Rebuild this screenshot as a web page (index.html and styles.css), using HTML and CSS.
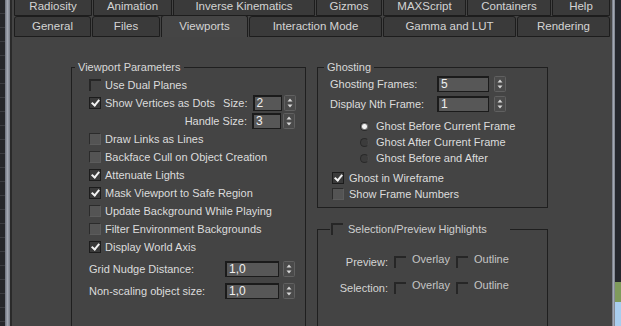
FILE: index.html
```html
<!DOCTYPE html>
<html lang="en">
<head>
    <meta charset="UTF-8">
    <meta name="viewport" content="width=device-width, initial-scale=1.0">
    <title>Preference Settings - Viewports</title>
    <link rel="stylesheet" href="styles.css">
</head>
<body>
    <div class="edge edge-left"></div>
    <div class="frame-bar"></div>
    <div class="frame-gap"></div>

    <div class="panel">
        <div class="tabs tabs-back">
            <div class="tab">Radiosity</div>
            <div class="tab">Animation</div>
            <div class="tab">Inverse Kinematics</div>
            <div class="tab">Gizmos</div>
            <div class="tab">MAXScript</div>
            <div class="tab">Containers</div>
            <div class="tab">Help</div>
        </div>
        <div class="tabs tabs-front">
            <div class="tab">General</div>
            <div class="tab">Files</div>
            <div class="tab active">Viewports</div>
            <div class="tab">Interaction Mode</div>
            <div class="tab">Gamma and LUT</div>
            <div class="tab">Rendering</div>
        </div>

        <div class="content">
            <fieldset class="group group-params">
                <legend>Viewport Parameters</legend>

                <div class="group-body">
                    <div class="check-row"><span class="box flat"></span>Use Dual Planes</div>
                    <div class="check-row">
                        <span class="box checked"></span>Show Vertices as Dots
                        <span class="spacer"></span>
                        <span class="field-label">Size:</span>
                        <span class="spinner"><span class="spin-field small">2</span><svg class="spin-arrows" viewBox="0 0 12 16" width="12" height="16"><rect x="0.5" y="0.5" width="11" height="15" rx="1" fill="#4a4a4a" stroke="#606060"/><path d="M6 3.5L8.5 6.5H3.5Z M6 12.5L8.5 9.5H3.5Z" fill="#d6d6d6"/></svg></span>
                    </div>
                    <div class="check-row right">
                        <span class="field-label">Handle Size:</span>
                        <span class="spinner"><span class="spin-field small">3</span><svg class="spin-arrows" viewBox="0 0 12 16" width="12" height="16"><rect x="0.5" y="0.5" width="11" height="15" rx="1" fill="#4a4a4a" stroke="#606060"/><path d="M6 3.5L8.5 6.5H3.5Z M6 12.5L8.5 9.5H3.5Z" fill="#d6d6d6"/></svg></span>
                    </div>
                    <div class="check-row"><span class="box"></span>Draw Links as Lines</div>
                    <div class="check-row"><span class="box"></span>Backface Cull on Object Creation</div>
                    <div class="check-row"><span class="box checked"></span>Attenuate Lights</div>
                    <div class="check-row"><span class="box checked"></span>Mask Viewport to Safe Region</div>
                    <div class="check-row"><span class="box"></span>Update Background While Playing</div>
                    <div class="check-row"><span class="box"></span>Filter Environment Backgrounds</div>
                    <div class="check-row"><span class="box checked"></span>Display World Axis</div>

                    <div class="value-row first">
                        <span>Grid Nudge Distance:</span>
                        <span class="spinner"><span class="spin-field wide">1,0</span><svg class="spin-arrows" viewBox="0 0 12 16" width="12" height="16"><rect x="0.5" y="0.5" width="11" height="15" rx="1" fill="#4a4a4a" stroke="#606060"/><path d="M6 3.5L8.5 6.5H3.5Z M6 12.5L8.5 9.5H3.5Z" fill="#d6d6d6"/></svg></span>
                    </div>
                    <div class="value-row">
                        <span>Non-scaling object size:</span>
                        <span class="spinner"><span class="spin-field wide">1,0</span><svg class="spin-arrows" viewBox="0 0 12 16" width="12" height="16"><rect x="0.5" y="0.5" width="11" height="15" rx="1" fill="#4a4a4a" stroke="#606060"/><path d="M6 3.5L8.5 6.5H3.5Z M6 12.5L8.5 9.5H3.5Z" fill="#d6d6d6"/></svg></span>
                    </div>
                </div>
            </fieldset>

            <div class="side">
                <fieldset class="group group-ghost">
                    <legend>Ghosting</legend>

                    <div class="group-body">
                        <div class="ghost-row">
                            <span class="ghost-label">Ghosting Frames:</span>
                            <span class="spinner"><span class="spin-field mid">5</span><svg class="spin-arrows" viewBox="0 0 12 16" width="12" height="16"><rect x="0.5" y="0.5" width="11" height="15" rx="1" fill="#4a4a4a" stroke="#606060"/><path d="M6 3.5L8.5 6.5H3.5Z M6 12.5L8.5 9.5H3.5Z" fill="#d6d6d6"/></svg></span>
                        </div>
                        <div class="ghost-row">
                            <span class="ghost-label">Display Nth Frame:</span>
                            <span class="spinner"><span class="spin-field mid">1</span><svg class="spin-arrows" viewBox="0 0 12 16" width="12" height="16"><rect x="0.5" y="0.5" width="11" height="15" rx="1" fill="#4a4a4a" stroke="#606060"/><path d="M6 3.5L8.5 6.5H3.5Z M6 12.5L8.5 9.5H3.5Z" fill="#d6d6d6"/></svg></span>
                        </div>

                        <div class="radios">
                            <div class="radio-row"><span class="radio on"></span>Ghost Before Current Frame</div>
                            <div class="radio-row"><span class="radio"></span>Ghost After Current Frame</div>
                            <div class="radio-row"><span class="radio"></span>Ghost Before and After</div>
                        </div>

                        <div class="ghost-checks">
                            <div class="small-check"><span class="box checked"></span>Ghost in Wireframe</div>
                            <div class="small-check"><span class="box"></span>Show Frame Numbers</div>
                        </div>
                    </div>
                </fieldset>

                <fieldset class="group group-highlight">
                    <legend><span class="box flat"></span>Selection/Preview Highlights</legend>

                    <div class="hl-row">
                        <span class="hl-label">Preview:</span>
                        <span class="box flat"></span><span class="hl-opt">Overlay</span>
                        <span class="box flat"></span><span class="hl-opt">Outline</span>
                    </div>
                    <div class="hl-row">
                        <span class="hl-label">Selection:</span>
                        <span class="box flat"></span><span class="hl-opt">Overlay</span>
                        <span class="box flat"></span><span class="hl-opt">Outline</span>
                    </div>
                </fieldset>
            </div>
        </div>
    </div>

    <div class="frame-bar thin"></div>
    <div class="edge edge-right"></div>
</body>
</html>
```

FILE: styles.css
```css
body {
    margin: 0;
    width: 621px;
    height: 326px;
    overflow: hidden;
    display: flex;
    background: #222327;
    font-family: "Liberation Sans", Arial, sans-serif;
    font-size: 11px;
    color: #dcdcdc;
}

/* viewport peeking out on both sides */
.edge {
    height: 100%;
}

.edge-left {
    width: 5px;
    background: repeating-linear-gradient(to bottom, #25262a 0 13px, #3b3c41 13px 14px);
}

.edge-right {
    width: 6px;
    background: linear-gradient(to bottom, #25272d 0 282px, #7f9a5c 282px 302px, #a9cdee 302px);
}

.frame-bar {
    width: 5px;
    background: linear-gradient(to right, #6c717d, #a3a8b3, #767b86);
}

.frame-bar.thin {
    width: 3px;
}

.frame-gap {
    width: 2px;
    background: #2a2a2a;
}

.panel {
    width: 600px;
    background: #444444;
    display: flex;
    flex-direction: column;
}

/* tabs */
.tabs {
    display: grid;
    padding-left: 2px;
    font-size: 11.5px;
}

.tabs-back {
    margin-top: -4px;
    height: 19px;
    grid-template-columns: 79px 80px 143px 67px 84px 85px 59px;
}

.tabs-front {
    margin-top: 1px;
    height: 20px;
    grid-template-columns: 78px 69px 88px 134px 134px 94px;
}

.tab {
    box-sizing: border-box;
    border: 1px solid #1d1d1d;
    border-radius: 3px 3px 0 0;
    background: #3a3a3a;
    color: #d4d4d4;
    text-align: center;
    line-height: 18px;
    margin-right: 1px;
}

.tab.active {
    background: #454545;
    border-bottom: none;
    margin-top: -1px;
    height: 22px;
    line-height: 20px;
    position: relative;
}

/* main content */
.content {
    display: flex;
    align-items: flex-start;
    padding-top: 24px;
    padding-left: 59px;
}

.group {
    margin: 0;
    padding: 0;
    border: 1px solid #1f1f1f;
    min-width: 0;
    box-sizing: border-box;
}

.group legend {
    padding: 0 3px;
    margin-left: 3px;
    line-height: 14px;
    color: #d8d8d8;
}

.group-params {
    width: 235px;
    height: 280px;
}

.group-params .group-body {
    padding: 2px 10px 0 17px;
}

.check-row {
    display: flex;
    align-items: center;
    gap: 4px;
    height: 18px;
    white-space: nowrap;
}

.check-row.right {
    justify-content: flex-end;
}

.spacer {
    flex: 1;
}

.field-label {
    margin-right: 1px;
}

.value-row {
    display: flex;
    align-items: center;
    justify-content: space-between;
    height: 22px;
}

.value-row.first {
    margin-top: 2px;
}

/* spinner */
.spinner {
    display: flex;
    align-items: center;
    gap: 2px;
}

.spin-field {
    box-sizing: border-box;
    height: 16px;
    background: #575757;
    border: 1px solid #1b1b1b;
    border-top-width: 2px;
    border-left-width: 2px;
    color: #f0f0f0;
    font-size: 12px;
    line-height: 13px;
    padding-left: 2px;
}

.spin-field.small {
    width: 29px;
}

.spin-field.wide {
    width: 54px;
    margin-right: 2px;
}

.spin-field.mid {
    width: 52px;
    margin-right: 3px;
}

.spin-arrows {
    display: block;
}

/* checkboxes and radios */
.box {
    position: relative;
    flex: none;
    box-sizing: border-box;
    width: 12px;
    height: 12px;
    background: #545454;
    border: 1px solid;
    border-color: #2b2b2b #5c5c5c #5c5c5c #2b2b2b;
}

.box.checked {
    background: #3a3a3a;
    border-color: #1c1c1c;
}

.box.checked::after {
    content: "";
    position: absolute;
    left: 3px;
    top: 0;
    width: 3px;
    height: 6px;
    border-right: 2px solid #f2f2f2;
    border-bottom: 2px solid #f2f2f2;
    transform: rotate(40deg);
}

.box.flat {
    background: #444444;
    border-width: 2px 0 0 2px;
    border-color: #262626;
}

.radio {
    flex: none;
    box-sizing: border-box;
    width: 9px;
    height: 9px;
    border-radius: 50%;
    background: #3c3c3c;
    border: 1px solid #2a2a2a;
    border-right-color: #4a4a4a;
}

.radio.on {
    background: radial-gradient(circle, #f4f4f4 0 2px, #7a7a7a 3px);
}

/* right column */
.side {
    margin-left: 11px;
    width: 231px;
    display: flex;
    flex-direction: column;
}

.group-ghost {
    height: 148px;
}

.group-ghost legend {
    margin-left: 6px;
}

.group-ghost .group-body {
    padding-left: 12px;
}

.ghost-row {
    display: flex;
    align-items: center;
    height: 20px;
}

.ghost-label {
    width: 107px;
}

.radios {
    margin-top: 4px;
    padding-left: 30px;
}

.radio-row {
    display: flex;
    align-items: center;
    gap: 7px;
    height: 16px;
}

.ghost-checks {
    margin-top: 4px;
    padding-left: 2px;
}

.small-check {
    display: flex;
    align-items: center;
    gap: 5px;
    height: 16px;
}

.group-highlight {
    margin-top: 14px;
    height: 120px;
    padding: 15px 0 0 1px;
}

.group-highlight legend {
    box-sizing: border-box;
    width: 180px;
    display: flex;
    align-items: center;
    gap: 5px;
    margin-left: 11px;
    padding: 0 0 0 1px;
    color: #cfcfcf;
}

.hl-row {
    display: flex;
    align-items: center;
    height: 22px;
    color: #c4c4c4;
}

.hl-row + .hl-row {
    margin-top: 4px;
}

.hl-label {
    width: 69px;
    text-align: right;
    margin-right: 6px;
    color: #d4d4d4;
}

.hl-opt {
    width: 50px;
    padding-left: 6px;
    margin-bottom: 6px;
    box-sizing: border-box;
}
```
